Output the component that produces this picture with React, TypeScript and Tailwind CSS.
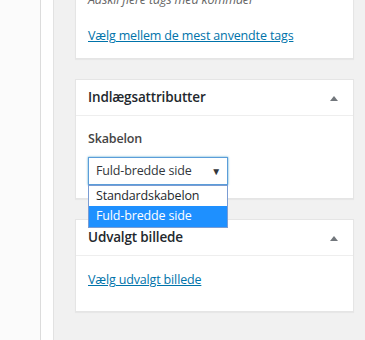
import React from "react";

const font = { fontFamily: '"Open Sans", "Noto Sans", sans-serif' };

function Tri() {
  return (
    <svg width="10" height="6" viewBox="0 0 10 6" className="block">
      <path d="M1 6 L5 1 L9 6 Z" fill="#72777c" />
    </svg>
  );
}

export default function App() {
  return (
    <div className="w-[365px] h-[340px] flex overflow-hidden text-[12.5px] tracking-[-0.15px]" style={font}>
      <div className="w-[41px] shrink-0 bg-[#fbfbfb] border-r border-[#dcdcdc]" />
      <div className="w-[13px] shrink-0 bg-white border-r border-[#e2e2e2]" />
      <div className="flex-1 bg-[#f1f1f1] pl-[21px] pr-[11px]">
        {/* Tags panel (cut off) */}
        <div className="mt-[-18px] bg-white border border-[#e5e5e5] shadow-[0_1px_1px_rgba(0,0,0,0.04)] px-[12px] pt-[8px] pb-[13px]">
          <p className="italic text-[#666] leading-[18px] m-0">Adskil flere tags med kommaer</p>
          <a className="block mt-[18px] text-[#0073aa] underline leading-[18px]">Vælg mellem de mest anvendte tags</a>
        </div>

        {/* Indlægsattributter */}
        <div className="mt-[20px] bg-white border border-[#e5e5e5] shadow-[0_1px_1px_rgba(0,0,0,0.04)]">
          <div className="h-[36px] flex items-center justify-between pl-[12px] pr-[14px] border-b border-[#eee]">
            <span className="text-[13.5px] font-semibold text-[#23282d]">Indlægsattributter</span>
            <Tri />
          </div>
          <div className="px-[12px] pt-[14px] pb-[13px]">
            <div className="font-semibold text-[#444] leading-[18px]">Skabelon</div>
            <div className="relative mt-[9px] w-[140px]">
              <div className="h-[28px] border border-[#5b9dd9] shadow-[0_0_2px_rgba(30,140,190,0.8)] flex items-center justify-between pl-[7px] pr-[6px] text-[#32373c] bg-white">
                <span>Fuld-bredde side</span>
                <span className="text-[10px] text-[#32373c]">▼</span>
              </div>
              <div className="absolute left-0 top-[28px] w-[140px] border border-[#7a9cd3] bg-white z-10 text-[#23282d]">
                <div className="h-[20px] flex items-center pl-[7px]">Standardskabelon</div>
                <div className="h-[21px] flex items-center pl-[7px] bg-[#1e90ff] text-white">Fuld-bredde side</div>
              </div>
            </div>
          </div>
        </div>

        {/* Udvalgt billede */}
        <div className="mt-[20px] bg-white border border-[#e5e5e5] shadow-[0_1px_1px_rgba(0,0,0,0.04)]">
          <div className="h-[36px] flex items-center justify-between pl-[12px] pr-[14px] border-b border-[#eee]">
            <span className="text-[13.5px] font-semibold text-[#23282d]">Udvalgt billede</span>
            <Tri />
          </div>
          <div className="px-[12px] pt-[15px] pb-[22px]">
            <a className="block text-[#0073aa] underline leading-[18px]">Vælg udvalgt billede</a>
          </div>
        </div>
      </div>
    </div>
  );
}
